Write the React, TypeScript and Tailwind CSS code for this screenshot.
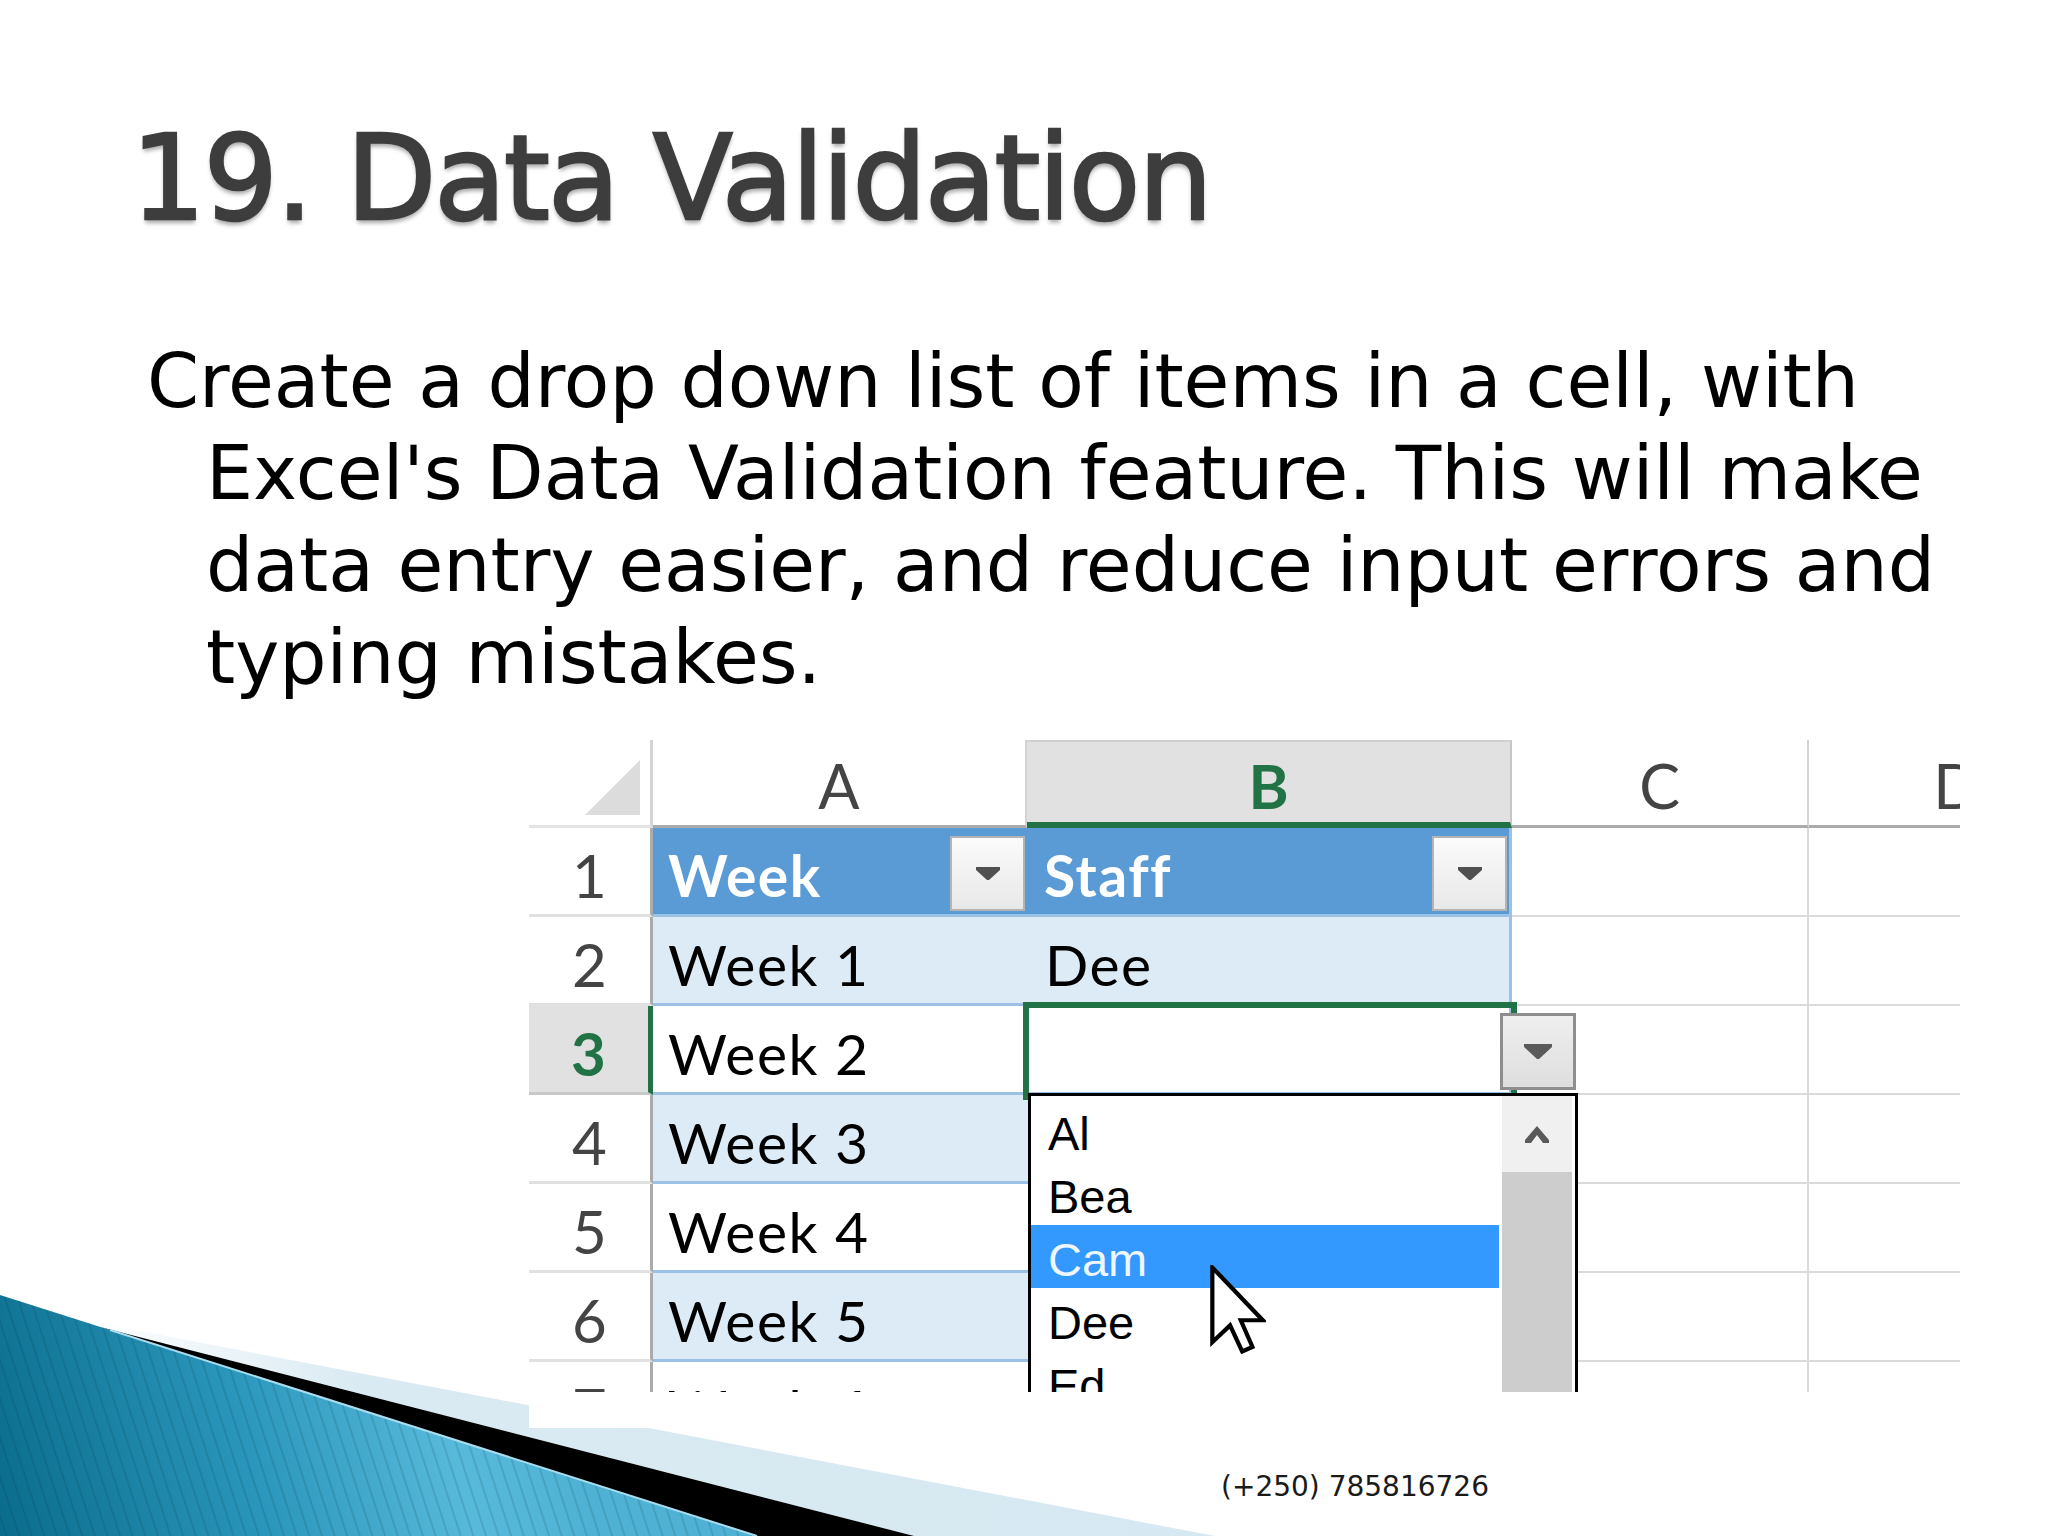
import React from "react";

function Decoration() {
  return (
    <svg
      className="absolute left-0 bottom-0"
      width="1250"
      height="250"
      viewBox="0 0 1250 250"
    >
      <defs>
        <linearGradient id="teal" x1="0" y1="250" x2="560" y2="110" gradientUnits="userSpaceOnUse">
          <stop offset="0" stopColor="#0a6c8c" />
          <stop offset="0.45" stopColor="#2a96bb" />
          <stop offset="0.8" stopColor="#58badb" />
          <stop offset="1" stopColor="#4fb2d4" />
        </linearGradient>
        <linearGradient id="pale" x1="80" y1="0" x2="1215" y2="0" gradientUnits="userSpaceOnUse">
          <stop offset="0" stopColor="#ffffff" />
          <stop offset="0.25" stopColor="#d9eaf2" />
          <stop offset="1" stopColor="#d6e8f1" />
        </linearGradient>
        <pattern id="stripes" width="12" height="12" patternUnits="userSpaceOnUse" patternTransform="rotate(-18)">
          <line x1="1" y1="0" x2="1" y2="12" stroke="#003040" strokeOpacity="0.14" strokeWidth="2" />
        </pattern>
      </defs>
      <polygon points="60,30 1215,250 914,250 100,41" fill="url(#pale)" />
      <polygon points="100,41 914,250 757,250" fill="#000000" />
      <polygon points="0,9 757,250 0,250" fill="url(#teal)" />
      <polygon points="0,9 757,250 0,250" fill="url(#stripes)" />
      <line x1="110" y1="44" x2="757" y2="250" stroke="#a8dcee" strokeWidth="2" />
    </svg>
  );
}

function FilterButton() {
  return (
    <div className="mt-[5px] flex h-[75px] w-[75px] shrink-0 items-center justify-center border-2 border-[#b4b4b4] bg-gradient-to-b from-[#fbfbfb] to-[#e8e8e8]">
      <svg width="24" height="13" viewBox="0 0 24 13">
        <polygon points="0,0 24,0 24,3 13,13 11,13 0,3" fill="#505050" />
      </svg>
    </div>
  );
}

function Cursor() {
  return (
    <svg width="56" height="89" viewBox="0 0 12 19">
      <path
        d="M0.5 0.5 L0.5 16.5 L4.3 12.9 L6.9 18.5 L9.1 17.5 L6.6 11.8 L11.3 11.8 Z"
        fill="#ffffff"
        stroke="#000000"
        strokeWidth="0.9"
        strokeLinejoin="miter"
      />
    </svg>
  );
}

type Row = { n: number; a: string; b: string; head?: boolean; band?: boolean; sel?: boolean };

const rows: Row[] = [
  { n: 1, a: "Week", b: "Staff", head: true },
  { n: 2, a: "Week 1", b: "Dee", band: true },
  { n: 3, a: "Week 2", b: "", sel: true },
  { n: 4, a: "Week 3", b: "", band: true },
  { n: 5, a: "Week 4", b: "" },
  { n: 6, a: "Week 5", b: "", band: true },
  { n: 7, a: "Week 6", b: "" },
];

function ExcelPicture() {
  return (
    <div className="ml-[529px] mt-[36px] h-[688px] w-[1431px] bg-white">
      <div className="relative h-[652px] w-[1431px] overflow-hidden [font-family:Lato,'Liberation_Sans',sans-serif]">
        {/* column header row */}
        <div className="flex h-[88px]">
          <div className="relative w-[124px] shrink-0 border-b-[3px] border-r-[3px] border-b-[#e3e3e3] border-r-[#d4d4d4] bg-white">
            <svg className="absolute left-[56px] top-[20px]" width="55" height="55" viewBox="0 0 55 55">
              <polygon points="55,0 55,55 0,55" fill="#dcdcdc" />
            </svg>
          </div>
          <div className="flex w-[374px] shrink-0 items-center justify-center border-b-[3px] border-r-2 border-b-[#ababab] border-r-[#d4d4d4] bg-white pt-[6px] text-[61px] leading-none text-[#444444]">
            A
          </div>
          <div className="flex w-[485px] shrink-0 items-center justify-center border-t-2 border-b-[6px] border-r-2 border-t-[#d0d0d0] border-b-[#217346] border-r-[#c6c6c6] bg-[#e1e1e1] pt-[6px] text-[61px] font-bold leading-none text-[#217346]">
            B
          </div>
          <div className="flex w-[297px] shrink-0 items-center justify-center border-b-[3px] border-r-2 border-b-[#ababab] border-r-[#d4d4d4] bg-white pt-[6px] text-[61px] leading-none text-[#444444]">
            C
          </div>
          <div className="flex w-[297px] shrink-0 items-center justify-center border-b-[3px] border-r-2 border-b-[#ababab] border-r-[#d4d4d4] bg-white pt-[6px] text-[61px] leading-none text-[#444444]">
            D
          </div>
        </div>

        {rows.map((r) => (
          <div key={r.n} className="flex h-[89px]">
            <div
              className={
                r.sel
                  ? "flex w-[124px] shrink-0 items-center justify-center border-b-[3px] border-r-[5px] border-b-[#c8c8c8] border-r-[#217346] bg-[#e1e1e1] pt-[8px] text-[60px] font-bold leading-none text-[#217346]"
                  : "flex w-[124px] shrink-0 items-center justify-center border-b-[3px] border-r-[3px] border-b-[#e1e1e1] border-r-[#ababab] bg-white pt-[8px] text-[60px] leading-none text-[#444444]"
              }
            >
              {r.n}
            </div>
            <div
              className={
                r.head
                  ? "flex w-[374px] shrink-0 items-center justify-between border-b-[3px] border-b-[#9bc2e6] bg-[#5b9bd5] pl-[15px] pr-[2px] text-[57px] font-bold leading-none tracking-[1.5px] text-white"
                  : r.band
                  ? "flex w-[374px] shrink-0 items-center border-b-[3px] border-b-[#9bc2e6] bg-[#ddebf7] pl-[15px] pt-[8px] text-[57px] leading-none tracking-[1.5px] text-black"
                  : "flex w-[374px] shrink-0 items-center border-b-[3px] border-b-[#9bc2e6] bg-white pl-[15px] pt-[8px] text-[57px] leading-none tracking-[1.5px] text-black"
              }
            >
              <span className={r.head ? "pt-[8px]" : ""}>{r.a}</span>
              {r.head && <FilterButton />}
            </div>
            <div
              className={
                r.head
                  ? "flex w-[485px] shrink-0 items-center justify-between border-b-[3px] border-r-[3px] border-b-[#9bc2e6] border-r-[#9bc2e6] bg-[#5b9bd5] pl-[17px] pr-[2px] text-[57px] font-bold leading-none tracking-[1.5px] text-white"
                  : r.band
                  ? "flex w-[485px] shrink-0 items-center border-b-[3px] border-r-[3px] border-b-[#9bc2e6] border-r-[#9bc2e6] bg-[#ddebf7] pl-[18px] pt-[8px] text-[57px] leading-none tracking-[1.5px] text-black"
                  : "flex w-[485px] shrink-0 items-center border-b-[3px] border-r-[3px] border-b-[#9bc2e6] border-r-[#9bc2e6] bg-white pl-[18px] pt-[8px] text-[57px] leading-none tracking-[1.5px] text-black"
              }
            >
              <span className={r.head ? "pt-[8px]" : ""}>{r.b}</span>
              {r.head && <FilterButton />}
            </div>
            <div className="w-[297px] shrink-0 border-b-2 border-r-2 border-[#dadada] bg-white" />
            <div className="w-[297px] shrink-0 border-b-2 border-r-2 border-[#dadada] bg-white" />
          </div>
        ))}

        {/* selection border around B3 */}
        <div className="absolute left-[494px] top-[262px] h-[98px] w-[494px] border-[6px] border-[#217346]" />

        {/* in-cell dropdown button */}
        <div className="absolute left-[971px] top-[273px] flex h-[77px] w-[76px] items-center justify-center border-[3px] border-[#8e8e8e] bg-gradient-to-b from-[#efefef] to-[#dedede]">
          <svg width="28" height="15" viewBox="0 0 28 15">
            <polygon points="0,0 28,0 28,3 15,15 13,15 0,3" fill="#5a5a5a" />
          </svg>
        </div>

        {/* dropdown list */}
        <div className="absolute left-[499px] top-[353px] flex h-[420px] w-[550px] border-[3px] border-black bg-white [font-family:'Liberation_Sans',Arial,sans-serif]">
          <div className="flex w-[468px] flex-col pt-[3px]">
            {["Al", "Bea", "Cam", "Dee", "Ed"].map((s) => (
              <div
                key={s}
                className={
                  s === "Cam"
                    ? "h-[63px] shrink-0 bg-[#3399ff] pl-[17px] pt-[3px] text-[47px] leading-[63px] text-[#eef6ff]"
                    : "h-[63px] shrink-0 pl-[17px] pt-[3px] text-[47px] leading-[63px] text-black"
                }
              >
                {s}
              </div>
            ))}
          </div>
          <div className="ml-[3px] flex w-[70px] flex-col">
            <div className="flex h-[76px] items-center justify-center bg-[#f0f0f0]">
              <svg width="28" height="20" viewBox="0 0 28 20">
                <polygon points="14,2 26,16 26,19 20,19 14,11 8,19 2,19 2,16" fill="#5a5a5a" />
              </svg>
            </div>
            <div className="flex-1 bg-[#cdcdcd]" />
          </div>
        </div>

        {/* mouse cursor */}
        <div className="absolute left-[681px] top-[525px]">
          <Cursor />
        </div>
      </div>
    </div>
  );
}

export default function App() {
  return (
    <div className="relative h-[1536px] w-[2048px] overflow-hidden bg-white">
      <Decoration />
      <div className="relative">
        <h1 className="pl-[131px] pt-[120px] text-[117px] font-normal leading-none tracking-[-2px] text-[#3d3d3d] [-webkit-text-stroke:2.5px_#3d3d3d] [font-family:'DejaVu_Sans',sans-serif] [text-shadow:0_4px_4px_rgba(0,0,0,0.35)]">
          19. Data Validation
        </h1>
        <p className="mt-[99px] whitespace-nowrap pl-[206px] text-[74.5px] leading-[92px] text-black [font-family:'DejaVu_Sans',sans-serif] [text-indent:-59px]">
          Create a drop down list of items in a cell, with
          <br />
          Excel's Data Validation feature. This will make
          <br />
          data entry easier, and reduce input errors and
          <br />
          typing mistakes.
        </p>
        <ExcelPicture />
        <div className="ml-[1221px] mt-[45px] text-[28px] leading-none text-[#1a1a1a] [font-family:'DejaVu_Sans',sans-serif]">
          (+250) 785816726
        </div>
      </div>
    </div>
  );
}
